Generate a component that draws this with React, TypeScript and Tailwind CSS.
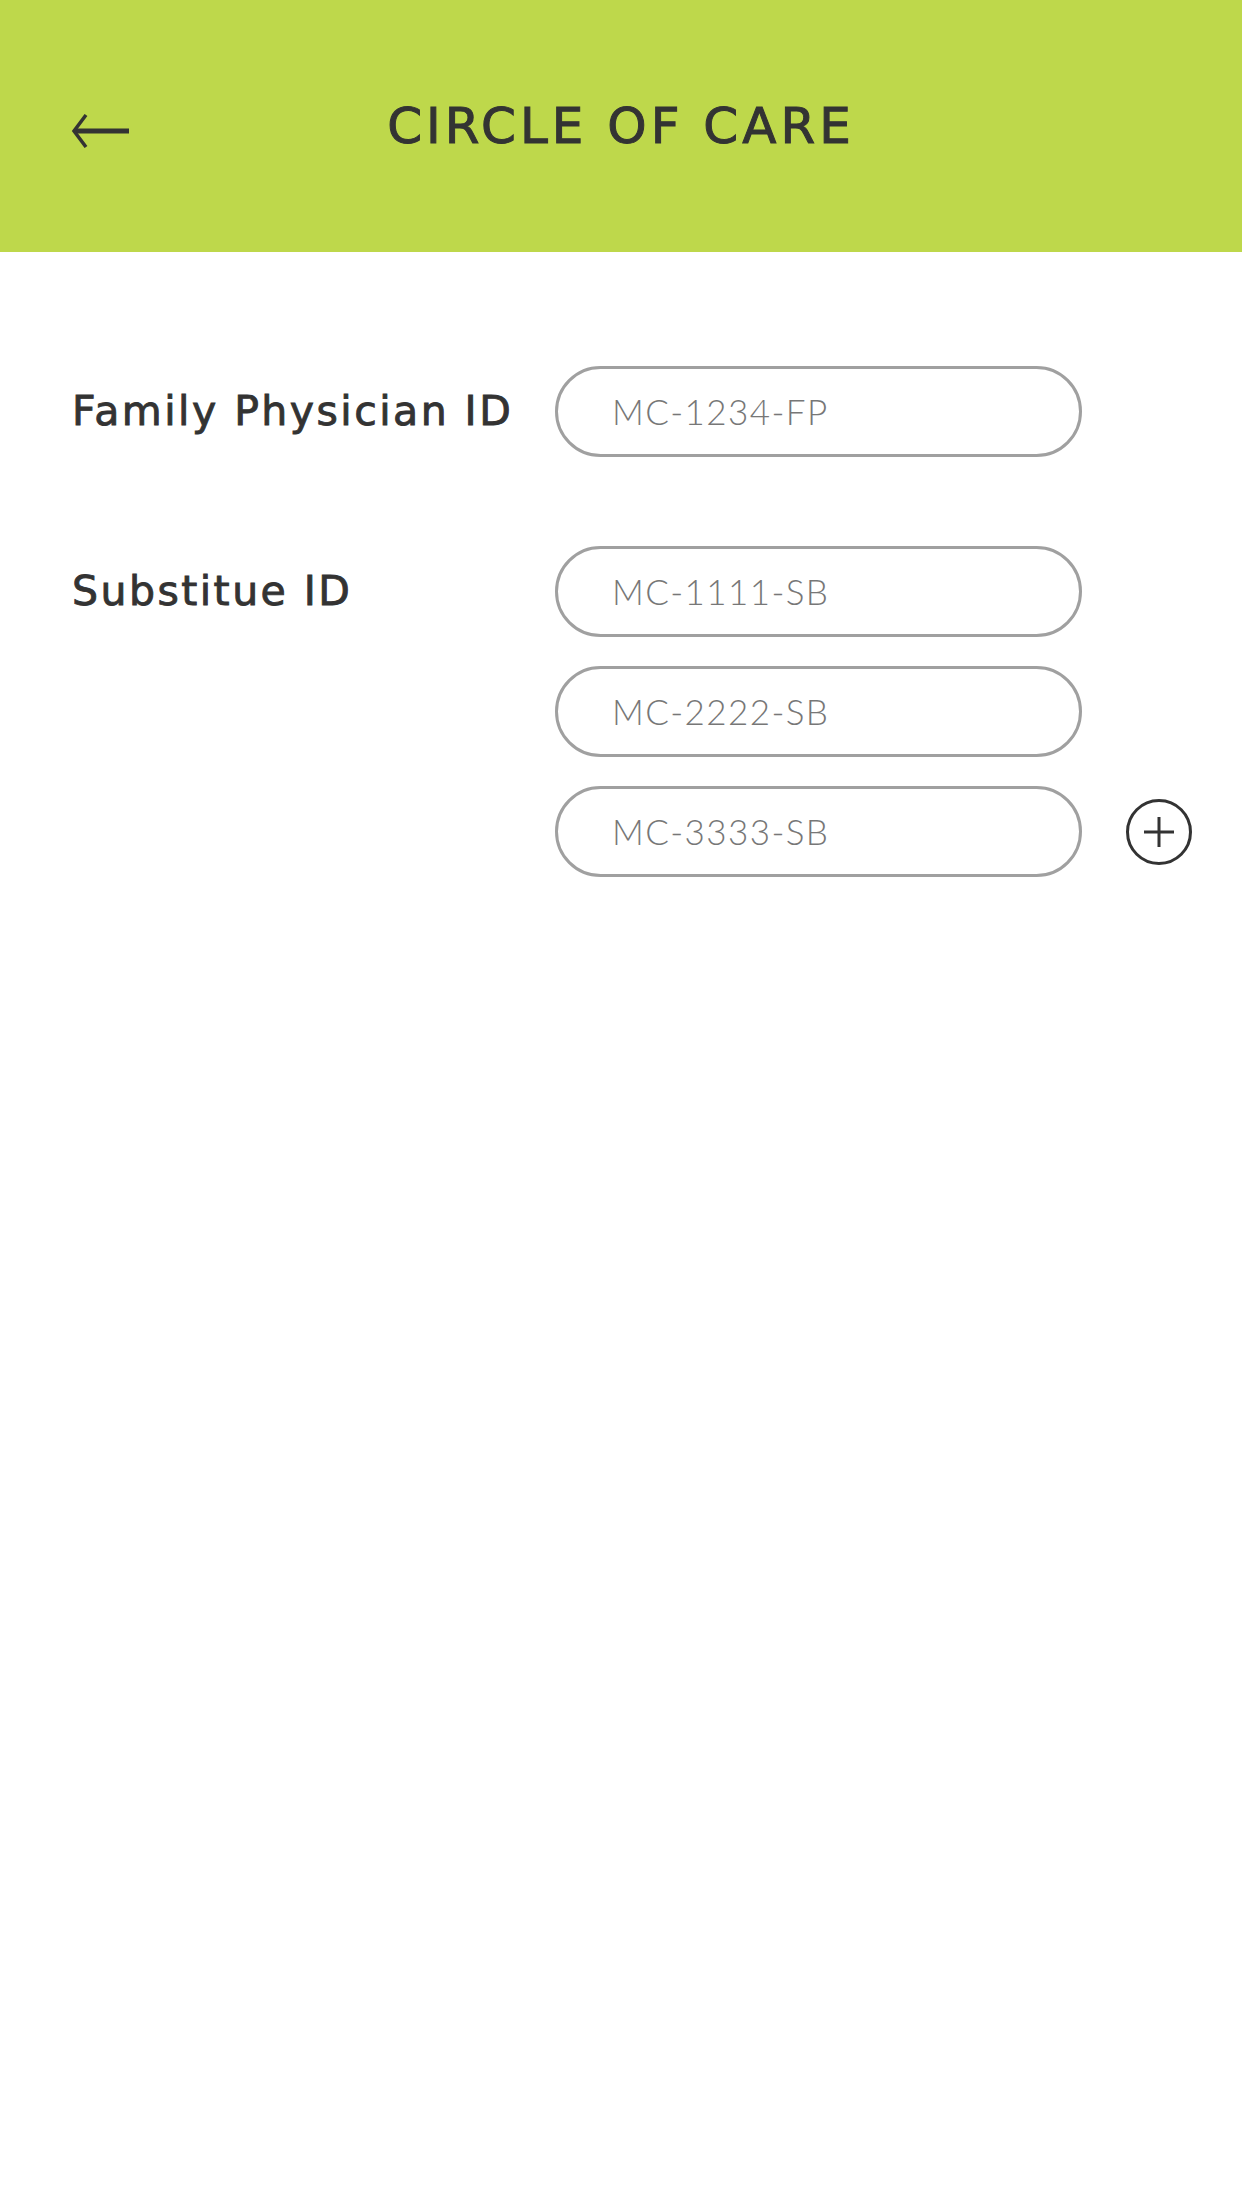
import React from 'react';

const heading = { fontFamily: '"DejaVu Sans", "Open Sans", sans-serif' };
const light = { fontFamily: 'Lato, "Open Sans", sans-serif' };

const Field = ({ value }: { value: string }) => (
  <div
    className="w-[527px] h-[91px] shrink-0 rounded-full border-[3px] border-[#a0a0a0] flex items-center pl-[54px] text-[35px] text-[#777777] font-light tracking-[0.04em]"
    style={light}
  >
    {value}
  </div>
);

export default function App() {
  return (
    <div className="min-h-[2208px] bg-white text-[#333333]" style={heading}>
      {/* Header */}
      <header className="h-[252px] bg-[#bed84b] grid grid-cols-[1fr_auto_1fr] items-center px-[71px]">
        <div className="mt-[10px]">
          <svg width="58" height="34" viewBox="0 0 58 34" fill="none">
            <path d="M4 17 H58" stroke="#333" strokeWidth="5" />
            <path d="M15 1 L3 17 L15 33" stroke="#333" strokeWidth="3.5" strokeLinejoin="miter" />
          </svg>
        </div>
        <h1 className="text-[50px] tracking-[0.08em] leading-none [-webkit-text-stroke:1px_#333333]">CIRCLE OF CARE</h1>
        <div />
      </header>

      {/* Content */}
      <main className="px-[72px] pt-[114px]">
        <div className="flex items-center">
          <div className="w-[483px] shrink-0 text-[41px] tracking-[0.06em] [-webkit-text-stroke:0.9px_#333333]">
            Family Physician ID
          </div>
          <Field value="MC-1234-FP" />
        </div>

        <div className="flex items-start mt-[89px]">
          <div className="w-[483px] shrink-0 h-[91px] flex items-center text-[41px] tracking-[0.06em] [-webkit-text-stroke:0.9px_#333333]">
            Substitue ID
          </div>
          <div className="flex flex-col gap-[29px]">
            <Field value="MC-1111-SB" />
            <Field value="MC-2222-SB" />
            <div className="flex items-center">
              <Field value="MC-3333-SB" />
              <button className="ml-[44px] shrink-0 w-[66px] h-[66px] rounded-full border-[3.5px] border-[#333] flex items-center justify-center">
                <svg width="32" height="32" viewBox="0 0 32 32">
                  <path d="M16 1 V31 M1 16 H31" stroke="#333" strokeWidth="3" />
                </svg>
              </button>
            </div>
          </div>
        </div>
      </main>
    </div>
  );
}
